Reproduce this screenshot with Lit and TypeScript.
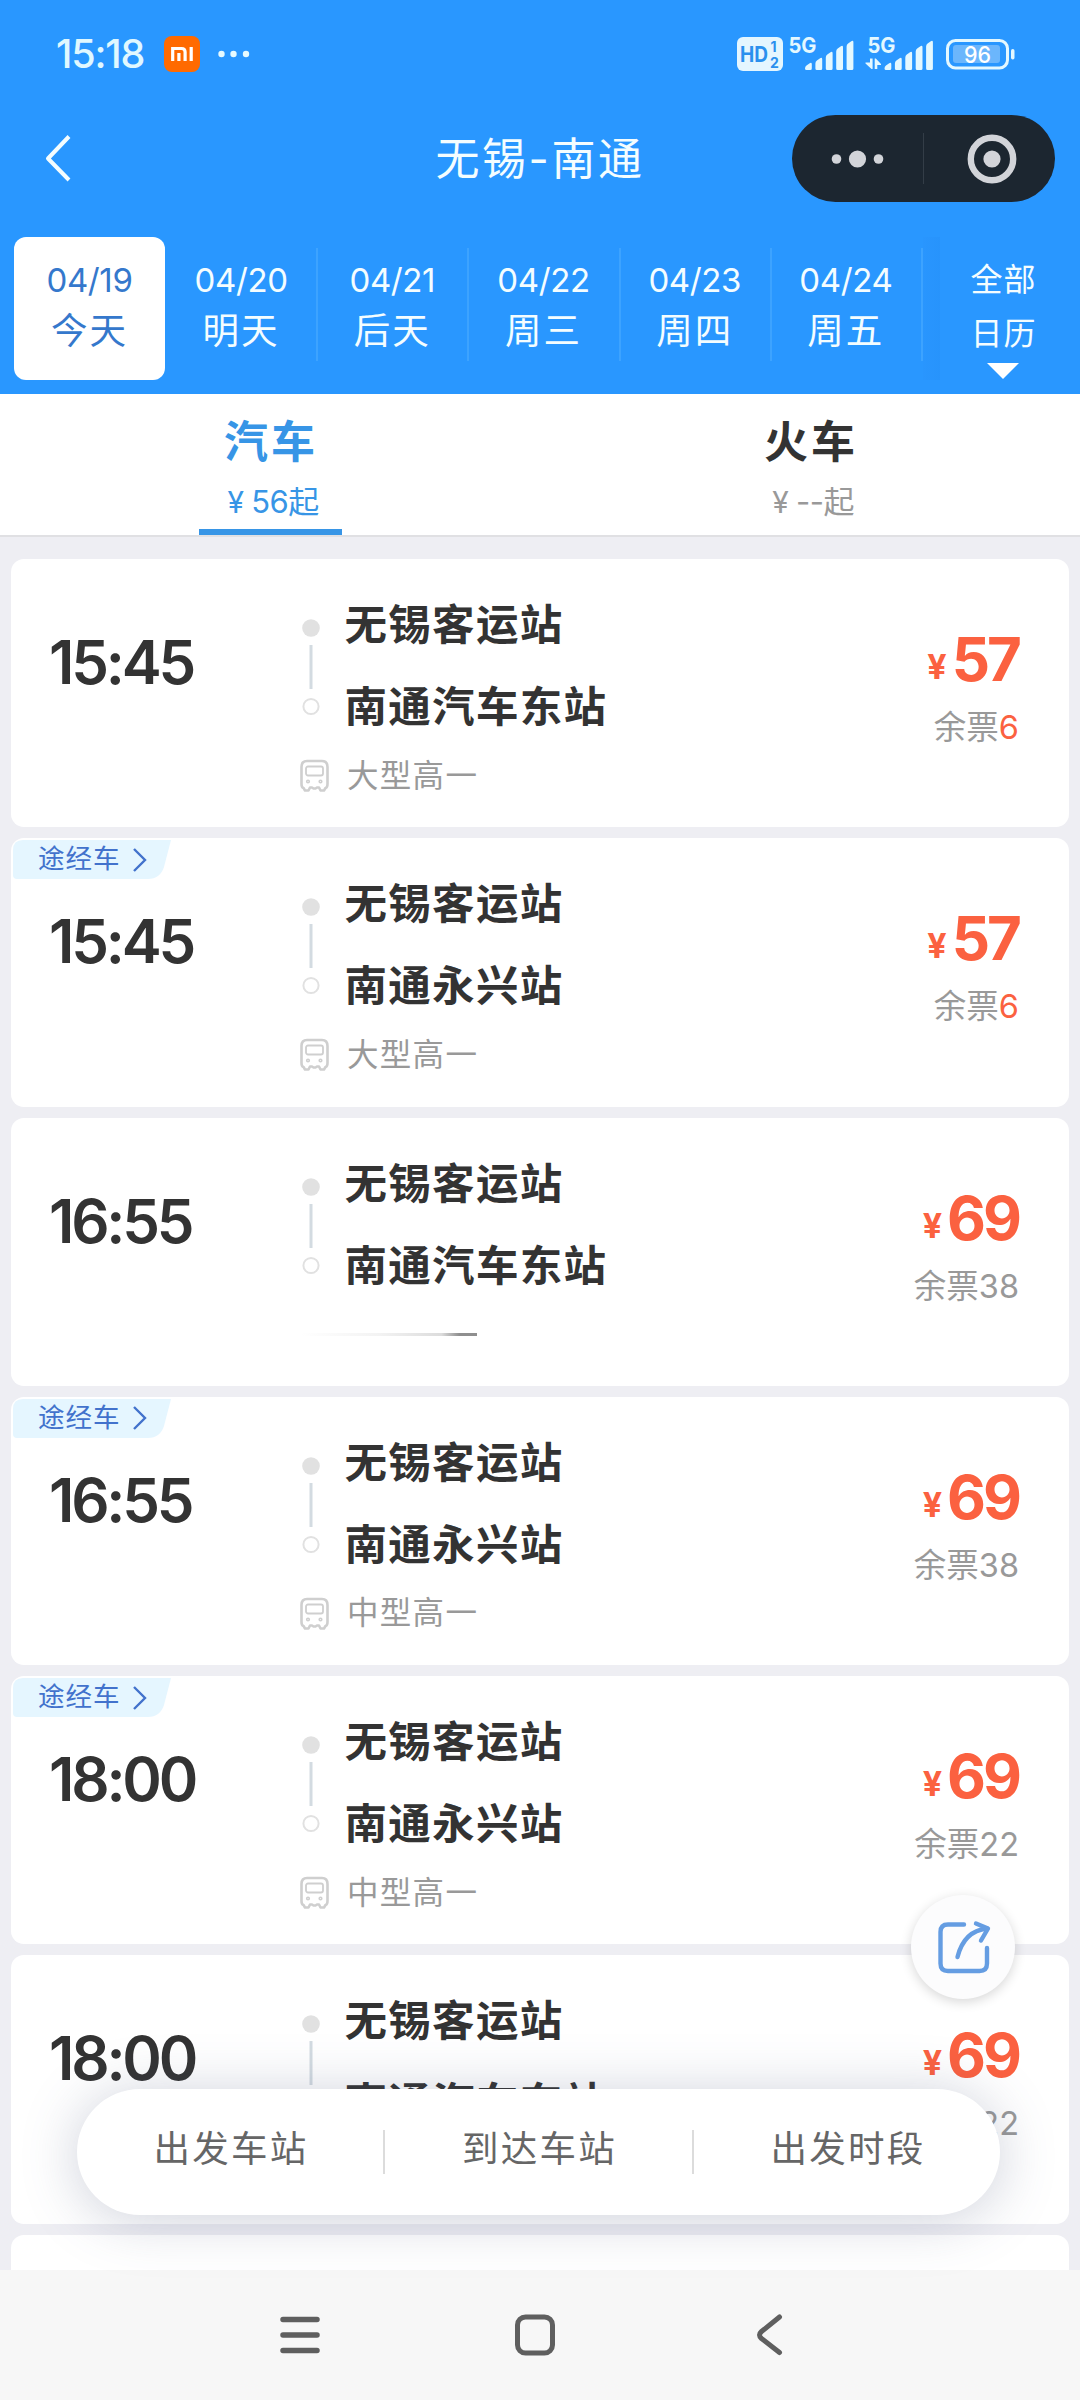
import { LitElement, html, css, svg, nothing } from "lit";
import { customElement, property } from "lit/decorators.js";

interface Trip {
  time: string;
  to: string;
  type: string;
  price: string;
  left: string;
  low?: boolean;
  via?: boolean;
}

const EAST = "南通汽车东站";
const YONGXING = "南通永兴站";

const TRIPS: Trip[] = [
  { time: "15:45", to: EAST, type: "大型高一", price: "57", left: "6", low: true },
  { time: "15:45", to: YONGXING, type: "大型高一", price: "57", left: "6", low: true, via: true },
  { time: "16:55", to: EAST, type: "", price: "69", left: "38" },
  { time: "16:55", to: YONGXING, type: "中型高一", price: "69", left: "38", via: true },
  { time: "18:00", to: YONGXING, type: "中型高一", price: "69", left: "22", via: true },
  { time: "18:00", to: EAST, type: "中型高一", price: "69", left: "22" },
];

const DAYS = [
  ["04/19", "今天"],
  ["04/20", "明天"],
  ["04/21", "后天"],
  ["04/22", "周三"],
  ["04/23", "周四"],
  ["04/24", "周五"],
];

const bars = (x: number) =>
  [22, 17, 11, 5, 0].map((top, i) => {
    const l = x + i * 10.4;
    return svg`<path d="M${l} ${top + 6.5}q0-2 1.500-3l3.200-2.300q2.100-1 2.100 1V28.500q0 1.500-1.500 1.500h-3.800q-1.500 0-1.500-1.500z" fill="#e4f8ff"/>`;
  });

@customElement("status-bar")
class StatusBar extends LitElement {
  static styles = css`
    :host { display: flex; height: 108px; padding: 0 63px 0 56px; align-items: center; box-sizing: border-box; color: #e0f8ff; }
    .clock { font-size: 39.500px; font-weight: 500; line-height: 44px; width: 89px; letter-spacing: -1.200px; white-space: nowrap; }
    .mi { margin-left: 19px; width: 36px; height: 36px; flex: none; }
    .dots { margin-left: 18px; width: 34px; height: 8px; flex: none; }
    .right { margin-left: auto; width: 280px; height: 48px; flex: none; }
    svg { display: block; }
    text { font-family: Inter, sans-serif; }
  `;
  render() {
    return html`
      <span class="clock">15:18</span>
      <svg class="mi" viewBox="0 0 36 36">
        <rect width="36" height="36" rx="8" fill="#ff6a00" />
        <path d="M8.700 25V12.500H17.500q3.600 0 3.600 3.600V25M14.900 17V25M27.200 11V25" fill="none" stroke="#fff" stroke-width="3.200" />
      </svg>
      <svg class="dots" viewBox="0 0 34 8" fill="#e6faff"><circle cx="3.500" cy="4" r="3.200" /><circle cx="15.500" cy="4" r="3.200" /><circle cx="28" cy="4" r="3.200" /></svg>
      <svg class="right" viewBox="738 30 280 48">
        <rect x="738" y="37" width="46" height="34" rx="6" fill="#e4f6ff" />
        <text x="741" y="61.500" font-size="21" font-weight="700" fill="#2a90ee" textLength="28" lengthAdjust="spacingAndGlyphs">HD</text>
        <text x="771.500" y="52" font-size="14" font-weight="700" fill="#2a90ee">1</text>
        <text x="771" y="67.500" font-size="14" font-weight="700" fill="#2a90ee">2</text>
        <text x="789.500" y="52.500" font-size="21.500" font-weight="700" fill="#e4f8ff" textLength="28" lengthAdjust="spacingAndGlyphs">5G</text>
        <g transform="translate(0 40)">${bars(806)}${bars(885.5)}</g>
        <text x="868.500" y="52.500" font-size="21.500" font-weight="700" fill="#e4f8ff" textLength="28" lengthAdjust="spacingAndGlyphs">5G</text>
        <path d="M871 58.500H873.600V69H872.500L866.500 63.500V62.500H871z" fill="#e4f8ff" />
        <path d="M878.300 69H875.700V58.500H876.800L882 64V65H878.300z" fill="#e4f8ff" />
        <rect x="948.500" y="40.500" width="60" height="27.500" rx="8" fill="none" stroke="#e4f8ff" stroke-width="3" />
        <rect x="954" y="45" width="47" height="18" rx="3" fill="#6bb6fc" />
        <rect x="1012" y="49" width="3.500" height="10.500" rx="1.700" fill="#e4f8ff" />
        <text x="965" y="63" font-size="23.500" font-weight="500" fill="#fff" textLength="27" lengthAdjust="spacingAndGlyphs">96</text>
      </svg>
    `;
  }
}

@customElement("title-bar")
class TitleBar extends LitElement {
  static styles = css`
    :host { display: grid; grid-template-columns: 288px 1fr 288px; align-items: center; height: 100px; color: #f4fdff; }
    .back { width: 28px; height: 50px; margin-left: 44px; display: block; }
    .title { text-align: center; font-size: 44px; line-height: 60px; letter-spacing: 2.600px; white-space: nowrap; padding-top: 1px; }
    .capsule { width: 263px; height: 87px; display: block; }
  `;
  render() {
    return html`
      <svg class="back" viewBox="0 0 28 50" fill="none" stroke="#f4fdff" stroke-width="4"><path d="M25 3.500L4 25.500L25 47" stroke-linejoin="round" /></svg>
      <div class="title">无锡-南通</div>
      <svg class="capsule" viewBox="0 0 263 87">
        <rect width="263" height="87" rx="43.500" fill="#1c2630" />
        <g fill="#d2d4d9"><circle cx="44.500" cy="44" r="4.800" /><circle cx="65.500" cy="44" r="8.600" /><circle cx="86.500" cy="44" r="4.800" /><circle cx="200" cy="44" r="8.600" /></g>
        <path d="M131.500 18V69" stroke="#333d47" />
        <circle cx="200" cy="44" r="21.200" fill="none" stroke="#d2d4d9" stroke-width="6.400" />
      </svg>
    `;
  }
}

@customElement("date-strip")
class DateStrip extends LitElement {
  static styles = css`
    :host { display: flex; height: 157px; padding: 0 0 0 14px; margin-top: 29px; box-sizing: border-box; color: #f4fdff; }
    .day { width: 151.200px; height: 143px; flex: none; box-sizing: border-box; padding-right: 3px; display: flex; flex-direction: column; align-items: center; background: linear-gradient(#3da3ff, #3da3ff) right 11px / 2px 113px no-repeat; }
    .day.on { background: #fff; border-radius: 12px; color: #3578cc; width: 151px; margin-right: 2px; padding-right: 0; }
    .d { margin-top: 24px; height: 38px; line-height: 38px; font-size: 33px; letter-spacing: -.4px; white-space: nowrap; }
    .w { margin-top: 7px; height: 50px; line-height: 50px; font-size: 36.500px; letter-spacing: 2px; }
    .shade { width: 17px; height: 143px; background: linear-gradient(90deg, #2994fd, #258ff8); opacity: .45; }
    .all { flex: 1; height: 143px; display: flex; flex-direction: column; align-items: center; padding-right: 13px; font-size: 32px; letter-spacing: 1px; }
    .all span { line-height: 53.500px; height: 53.500px; }
    .all span:first-child { margin-top: 16px; }
    .tri { width: 32px; height: 16px; margin-top: 3px; display: block; }
  `;
  render() {
    return html`
      ${DAYS.map(([d, w], i) => html`<div class="day ${i === 0 ? "on" : ""}"><span class="d">${d}</span><span class="w">${w}</span></div>`)}
      <div class="shade"></div>
      <div class="all"><span>全部</span><span>日历</span><svg class="tri" viewBox="0 0 32 16"><path d="M0 0H32L16 16z" fill="#fff" /></svg></div>
    `;
  }
}

@customElement("mode-tabs")
class ModeTabs extends LitElement {
  static styles = css`
    :host { display: flex; height: 141px; background: #fff; border-bottom: 2px solid #e0e0e3; box-sizing: content-box; }
    .tab { flex: 1; display: flex; flex-direction: column; align-items: center; color: #333; }
    .name { margin-top: 20px; font-size: 44px; font-weight: 700; line-height: 56px; letter-spacing: 3px; padding-left: 2px; }
    .from { margin-top: 12px; font-size: 31px; line-height: 40px; color: #999; padding-left: 6px; white-space: nowrap; letter-spacing: -.6px; }
    .y { margin-right: 8px; font-size: 30px; }
    .line { margin-top: 7px; width: 143px; height: 6px; }
    .on .name, .on .from { color: #3795e6; }
    .on .line { background: #3795e6; }
  `;
  render() {
    return html`
      <div class="tab on"><span class="name">汽车</span><span class="from"><span class="y">¥</span>56起</span><i class="line"></i></div>
      <div class="tab"><span class="name">火车</span><span class="from"><span class="y">¥</span>--起</span><i class="line"></i></div>
    `;
  }
}

@customElement("trip-card")
class TripCard extends LitElement {
  @property({ attribute: false }) trip!: Trip;
  static styles = css`
    :host { display: grid; grid-template-columns: 289px 1fr auto; height: 268.300px; flex: none; background: #fff; border-radius: 13px; padding-right: 51px; box-sizing: border-box; position: relative; color: #333; }
    .time { margin: 73px 0 0 38px; font-size: 60px; font-weight: 620; line-height: 60px; letter-spacing: -3.200px; white-space: nowrap; }
    .route { display: grid; grid-template-columns: 22px 1fr; column-gap: 22.500px; align-content: start; padding-top: 25px; }
    .rail { width: 22px; height: 164px; display: block; margin-top: -1px; }
    .stops { display: flex; flex-direction: column; font-size: 42.500px; font-weight: 700; letter-spacing: 1.300px; }
    .stops span { height: 82px; line-height: 82px; white-space: nowrap; }
    .type { grid-column: 1 / 3; display: flex; align-items: center; height: 40px; margin-top: 7.500px; font-size: 31.500px; letter-spacing: 1.300px; color: #999; line-height: 40px; }
    .bus { width: 29px; height: 33px; margin-right: 18px; flex: none; }
    .fade { width: 177px; height: 3px; background: linear-gradient(90deg, #fff 0, #f3f3f3 45%, #dcdcdc 80%, #8f8f8f 90%, #8f8f8f 100%); }
    .cost { display: flex; flex-direction: column; align-items: flex-end; padding-top: 70px; }
    .price { height: 60px; line-height: 60px; font-size: 60px; font-weight: 670; color: #fb6140; letter-spacing: -3px; margin-right: -1px; white-space: nowrap; }
    .yen { font-size: 34px; margin-right: 5px; letter-spacing: 0; font-weight: 700; position: relative; top: -2px; }
    .left { height: 60px; line-height: 60px; margin-top: 9px; font-size: 32.500px; color: #999; white-space: nowrap; margin-right: -1px; }
    .low { color: #fb6140; }
    .tag { position: absolute; left: 2px; top: 2px; width: 159px; height: 39px; display: flex; align-items: center; box-sizing: border-box; padding-left: 25px; font-size: 26.500px; letter-spacing: 1px; color: #4272cc; line-height: 37px; }
    .tag span { position: relative; white-space: nowrap; height: 39px; }
    .tagbg { position: absolute; left: 0; top: 0; }
    .chev { margin-left: 11px; position: relative; }
  `;
  render() {
    const t = this.trip;
    return html`
      ${t.via
        ? html`<div class="tag">
            <svg class="tagbg" width="159" height="39"><path d="M10 0H158L151 27Q147 39 135 39H4Q0 39 0 35V10Q0 0 10 0z" fill="#e5f6ff" /></svg>
            <span>途经车</span>
            <svg class="chev" width="15" height="26" fill="none" stroke="#4272cc" stroke-width="2.400"><path d="M2 2L13 13L2 24" /></svg>
          </div>`
        : nothing}
      <div class="time">${t.time}</div>
      <div class="route">
        <svg class="rail" viewBox="0 0 22 164">
          <circle cx="11" cy="45" r="8.800" fill="#e1e1e1" />
          <path d="M11 62V106" stroke="#d3dbe1" stroke-width="3" />
          <circle cx="11" cy="123.500" r="7.600" fill="none" stroke="#e1e1e1" stroke-width="2" />
        </svg>
        <div class="stops"><span>无锡客运站</span><span>${t.to}</span></div>
        <div class="type">
          ${t.type
            ? html`<svg class="bus" viewBox="0 0 29 33" fill="none" stroke="#cfcfcf" stroke-width="2.600" stroke-linejoin="round">
                  <path d="M7 2H22Q27.500 2 27.500 8V25Q27.500 28.500 25.500 29L24 31.500H20.500L19 28.500H17L15.500 29.500H13.500L12 28.500H10L8.500 31.500H5L3.500 29Q1.500 28.500 1.500 25V8Q1.500 2 7 2z" />
                  <rect x="6" y="7.500" width="17" height="9" rx="2" stroke-width="1.800" />
                  <circle cx="8" cy="22.500" r=".8" /><circle cx="20.500" cy="22.500" r=".8" />
                </svg><span>${t.type}</span>`
            : html`<i class="fade"></i>`}
        </div>
      </div>
      <div class="cost">
        <div class="price"><span class="yen">¥</span>${t.price}</div>
        <div class="left">余票<span class=${t.low ? "low" : ""}>${t.left}</span></div>
      </div>
    `;
  }
}

@customElement("filter-bar")
class FilterBar extends LitElement {
  static styles = css`
    :host { position: absolute; left: 77px; top: 2089px; width: 923px; height: 126px; border-radius: 63px; background: #fff; display: grid; grid-template-columns: 308px 309px 1fr; box-shadow: 0 4px 56px rgba(70, 80, 120, .27); }
    span { text-align: center; font-size: 36.500px; letter-spacing: 2.200px; line-height: 120px; color: #666; background: linear-gradient(#dcdcdc, #dcdcdc) right 41px / 2px 44px no-repeat; }
    span:last-child { background: none; padding-left: 2px; }
  `;
  render() {
    return html`<span>出发车站</span><span>到达车站</span><span>出发时段</span>`;
  }
}

@customElement("system-nav")
class SystemNav extends LitElement {
  static styles = css`
    :host { display: block; height: 130px; background: #f7f7f7; }
    svg { display: block; }
  `;
  render() {
    return html`<svg width="1080" height="130" fill="none" stroke="#5f5f5f" stroke-width="5" stroke-linecap="round" stroke-linejoin="round">
      <path d="M283 49.500H317M283 65H317M283 80.500H317" stroke-width="5.500" />
      <rect x="517.500" y="47" width="35" height="36" rx="8" />
      <path d="M779.500 47L761.500 61.500Q757.500 65 761.500 68.500L779.500 82.500" />
    </svg>`;
  }
}

@customElement("app-root")
class AppRoot extends LitElement {
  static styles = css`
    :host { display: flex; flex-direction: column; width: 1080px; height: 2400px; overflow: hidden; position: relative; background: #eeeef3; font-family: Inter, "Noto Sans CJK SC", sans-serif; }
    .top { background: #2997ff; height: 394px; flex: none; }
    mode-tabs, system-nav { flex: none; }
    .list { flex: 1; min-height: 0; overflow: hidden; display: flex; flex-direction: column; gap: 11px; padding: 22px 11px 0; }
    .next { height: 268px; flex: none; background: #fff; border-radius: 13px; }
    .share { position: absolute; left: 911px; top: 1895px; width: 104px; height: 104px; border-radius: 50%; background: #fcfcfd; box-shadow: 0 3px 12px rgba(0, 0, 0, .16); }
    .share svg { display: block; }
  `;
  render() {
    return html`
      <div class="top"><status-bar></status-bar><title-bar></title-bar><date-strip></date-strip></div>
      <mode-tabs></mode-tabs>
      <div class="list">${TRIPS.map((t) => html`<trip-card .trip=${t}></trip-card>`)}<div class="next"></div></div>
      <system-nav></system-nav>
      <filter-bar></filter-bar>
      <div class="share">
        <svg width="104" height="104" fill="none" stroke="#659de2" stroke-width="4.400" stroke-linecap="round" stroke-linejoin="round">
          <path d="M53 29.500H37Q29.500 29.500 29.500 37V68.500Q29.500 76 37 76H68.500Q76 76 76 68.500V53" />
          <path d="M46.500 62Q53 36 76 33.500" />
          <path d="M65 28.500L77 33.500L70 45.500" />
        </svg>
      </div>
    `;
  }
}
